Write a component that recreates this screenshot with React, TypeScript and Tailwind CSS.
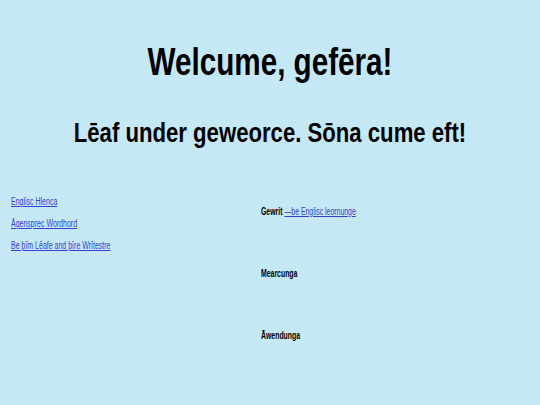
export default function App() {
  // Arial Narrow look: Liberation Sans squeezed horizontally
  const font = { fontFamily: '"Liberation Sans Narrow", "Arial Narrow", "Liberation Sans", Arial, sans-serif' }
  return (
    <div className="min-h-[405px] w-full overflow-hidden bg-[#c5e8f7] text-black" style={font}>
      <h1 className="origin-center scale-x-[0.78] pt-[43px] text-center text-[38px] font-bold leading-[38px]">
        Welcume, gefēra!
      </h1>
      <h2 className="mt-[39px] origin-center scale-x-[0.82] text-center text-[27px] font-bold leading-[27px]">
        Lēaf under geweorce. Sōna cume eft!
      </h2>

      <div className="mt-[50px] flex text-[10px] leading-[10px]">
        <div className="w-[261px] pl-[11px]">
          <nav className="flex origin-left scale-x-[0.7] flex-col gap-[12px]">
            <a href="#" className="text-[#3440d4] underline">Englisc Hlenca</a>
            <a href="#" className="text-[#3440d4] underline">Āgensprec Wordhord</a>
            <a href="#" className="text-[#3440d4] underline">Be þīm Lēafe and þīre Wrītestre</a>
          </nav>
        </div>
        <div className="flex origin-left scale-x-[0.69] flex-col gap-[52px] pt-[10px]">
          <p>
            <span className="font-bold">Gewrit</span>{' '}
            <a href="#" className="text-[#3440d4] underline">—be Englisc leornunge</a>
          </p>
          <p className="font-bold">Mearcunga</p>
          <p className="font-bold">Āwendunga</p>
        </div>
      </div>
    </div>
  )
}
